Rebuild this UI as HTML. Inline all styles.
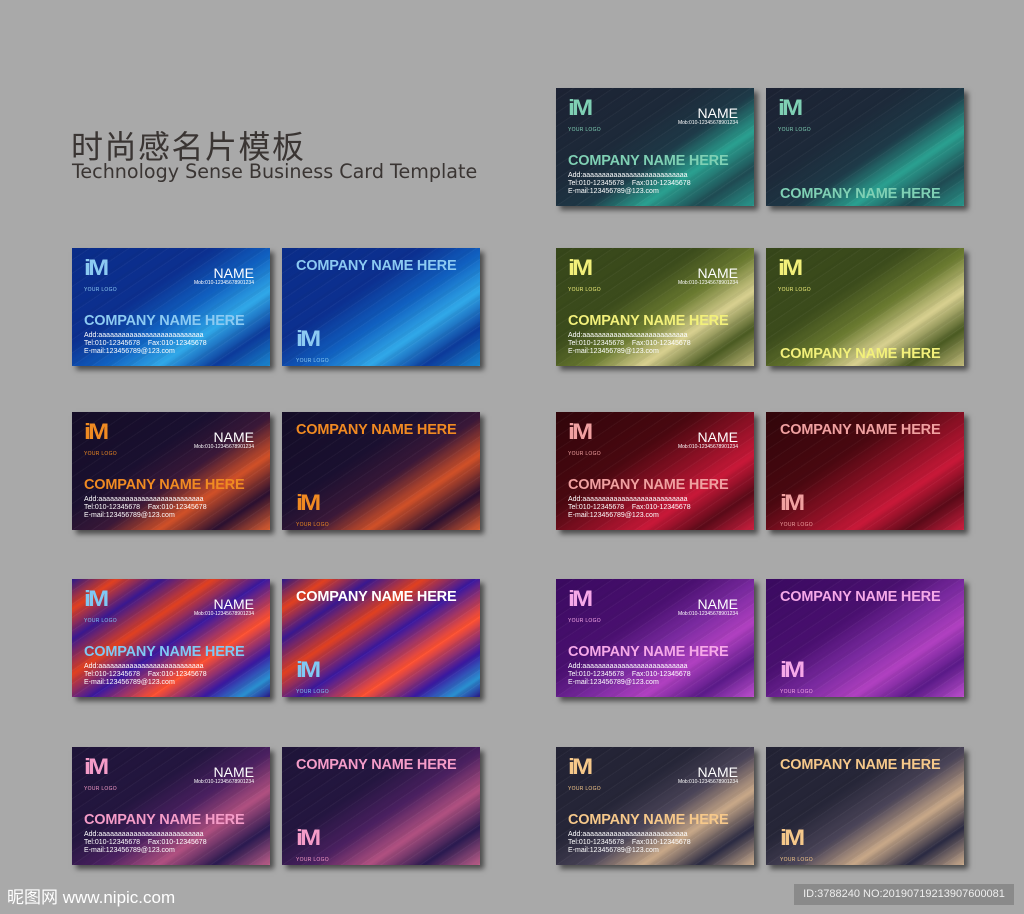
<!DOCTYPE html>
<html><head><meta charset="utf-8"><style>
*{margin:0;padding:0;box-sizing:border-box}
body{width:1024px;height:914px;background:#a9a9a9;position:relative;overflow:hidden;font-family:"Liberation Sans",Arial,sans-serif}
.t1{position:absolute;left:71px;top:122px;font-size:32px;color:#3a3533;font-family:"Liberation Sans","Noto Sans CJK SC",sans-serif;letter-spacing:1.5px;font-weight:normal}
.t2{position:absolute;left:72px;top:160px;font-size:19.5px;color:#3a3533;font-family:"DejaVu Sans","Liberation Sans",sans-serif;white-space:nowrap;transform:scaleX(0.98);transform-origin:left}
.c{position:absolute;width:198px;height:118px;overflow:hidden;box-shadow:4px 4px 5px rgba(0,0,0,.55)}
.c::after{content:"";position:absolute;inset:0;background:repeating-linear-gradient(-34deg,rgba(255,255,255,.035) 0 1px,rgba(0,0,0,.03) 1px 4px,rgba(255,255,255,0) 4px 11px)}
.lg{position:absolute;left:12px;top:10px;z-index:2;font-weight:bold;font-size:22px;letter-spacing:-2.5px;line-height:20px;transform:scaleX(1.15);transform-origin:left}
.lg i{display:block;font-size:5px;letter-spacing:.3px;font-style:normal;margin-top:2px;font-weight:normal;transform:scaleX(.87);transform-origin:left}
.nm{position:absolute;right:16px;top:18px;z-index:2;color:#fff;font-size:14px;text-align:right;line-height:14px}
.nm i{display:block;font-size:5px;font-style:normal;line-height:6px}
.co{position:absolute;left:12px;top:65px;z-index:2;font-weight:bold;font-size:14.5px;white-space:nowrap;letter-spacing:-.2px}
.ad{position:absolute;left:12px;top:84px;z-index:2;color:#fff;font-size:7px;line-height:8px;white-space:nowrap}
.bt .co{top:10px;left:14px}
.bt .lg{top:81px;left:14px}
.bb .co{top:98px;left:14px}
.wm{position:absolute;left:7px;top:883px;color:#fff;font-size:17px;font-family:"Liberation Sans","Noto Sans CJK SC",sans-serif}
.id{position:absolute;left:794px;top:884px;width:220px;height:21px;background:#8a8a8a;color:#eee;font-size:11px;line-height:21px;text-align:center}
.blue{background:linear-gradient(-34deg,#1a88d0 0%,#0c3a9a 15%,#30a8e8 30%,#1060c0 45%,#0c3090 62%,#0a2c88 100%)}
.blue .lg,.blue .co{color:#8ccaf2}
.teal{background:linear-gradient(-34deg,#2a9a8e 0%,#1f4a52 15%,#2aa090 30%,#1e3a48 45%,#1d2a3a 62%,#1c2233 100%)}
.teal .lg,.teal .co{color:#7fd0b4}
.olive{background:linear-gradient(-34deg,#c8c080 0%,#4a5a22 15%,#d8d090 30%,#6a7a30 45%,#3c4c1c 62%,#36461a 100%)}
.olive .lg,.olive .co{color:#f2f07a}
.org{background:linear-gradient(-34deg,#e06030 0%,#2a1030 15%,#d05028 30%,#3a1838 45%,#1a1030 62%,#140c26 100%)}
.org .lg,.org .co{color:#f08a22}
.red{background:linear-gradient(-34deg,#d02040 0%,#5a0a18 15%,#c81838 30%,#8a1024 45%,#4a0810 62%,#30050a 100%)}
.red .lg,.red .co{color:#f0a0a0}
.mix{background:linear-gradient(-34deg,#2a1888 0%,#2a90d0 8%,#3a18a0 18%,#ff5030 32%,#3a18a0 48%,#e04020 62%,#3a1890 76%,#e04020 88%,#2a1888 100%)}
.mix .lg,.mix .co{color:#80c8f4}
.mix.bt .co{color:#fff}
.pur{background:linear-gradient(-34deg,#c050d0 0%,#5a1a88 15%,#b040c0 30%,#7a2aa0 45%,#4a1070 62%,#3a0a60 100%)}
.pur .lg,.pur .co{color:#f6a8e8}
.pink{background:linear-gradient(-34deg,#c0608a 0%,#2a1a50 15%,#b05080 30%,#4a2060 45%,#241640 62%,#1e1438 100%)}
.pink .lg,.pink .co{color:#f59cc8}
.gold{background:linear-gradient(-34deg,#d0b090 0%,#2a2a42 15%,#c8a888 30%,#4a4458 45%,#262638 62%,#222234 100%)}
.gold .lg,.gold .co{color:#f6c88a}
</style></head><body>
<div class="t1">时尚感名片模板</div>
<div class="t2">Technology Sense Business Card Template</div>

<div class="c blue" style="left:72px;top:248px"><div class="lg">iM<i>YOUR LOGO</i></div><div class="nm">NAME<i>Mob:010-12345678901234</i></div><div class="co">COMPANY NAME HERE</div><div class="ad">Add:aaaaaaaaaaaaaaaaaaaaaaaaaaa<br>Tel:010-12345678&nbsp;&nbsp;&nbsp; Fax:010-12345678<br>E-mail:123456789@123.com</div></div>
<div class="c blue bt" style="left:282px;top:248px"><div class="co">COMPANY NAME HERE</div><div class="lg">iM<i>YOUR LOGO</i></div></div>

<div class="c org" style="left:72px;top:412px"><div class="lg">iM<i>YOUR LOGO</i></div><div class="nm">NAME<i>Mob:010-12345678901234</i></div><div class="co">COMPANY NAME HERE</div><div class="ad">Add:aaaaaaaaaaaaaaaaaaaaaaaaaaa<br>Tel:010-12345678&nbsp;&nbsp;&nbsp; Fax:010-12345678<br>E-mail:123456789@123.com</div></div>
<div class="c org bt" style="left:282px;top:412px"><div class="co">COMPANY NAME HERE</div><div class="lg">iM<i>YOUR LOGO</i></div></div>

<div class="c mix" style="left:72px;top:579px"><div class="lg">iM<i>YOUR LOGO</i></div><div class="nm">NAME<i>Mob:010-12345678901234</i></div><div class="co">COMPANY NAME HERE</div><div class="ad">Add:aaaaaaaaaaaaaaaaaaaaaaaaaaa<br>Tel:010-12345678&nbsp;&nbsp;&nbsp; Fax:010-12345678<br>E-mail:123456789@123.com</div></div>
<div class="c mix bt" style="left:282px;top:579px"><div class="co">COMPANY NAME HERE</div><div class="lg">iM<i>YOUR LOGO</i></div></div>

<div class="c pink" style="left:72px;top:747px"><div class="lg">iM<i>YOUR LOGO</i></div><div class="nm">NAME<i>Mob:010-12345678901234</i></div><div class="co">COMPANY NAME HERE</div><div class="ad">Add:aaaaaaaaaaaaaaaaaaaaaaaaaaa<br>Tel:010-12345678&nbsp;&nbsp;&nbsp; Fax:010-12345678<br>E-mail:123456789@123.com</div></div>
<div class="c pink bt" style="left:282px;top:747px"><div class="co">COMPANY NAME HERE</div><div class="lg">iM<i>YOUR LOGO</i></div></div>

<div class="c teal" style="left:556px;top:88px"><div class="lg">iM<i>YOUR LOGO</i></div><div class="nm">NAME<i>Mob:010-12345678901234</i></div><div class="co">COMPANY NAME HERE</div><div class="ad">Add:aaaaaaaaaaaaaaaaaaaaaaaaaaa<br>Tel:010-12345678&nbsp;&nbsp;&nbsp; Fax:010-12345678<br>E-mail:123456789@123.com</div></div>
<div class="c teal bb" style="left:766px;top:88px"><div class="lg">iM<i>YOUR LOGO</i></div><div class="co">COMPANY NAME HERE</div></div>

<div class="c olive" style="left:556px;top:248px"><div class="lg">iM<i>YOUR LOGO</i></div><div class="nm">NAME<i>Mob:010-12345678901234</i></div><div class="co">COMPANY NAME HERE</div><div class="ad">Add:aaaaaaaaaaaaaaaaaaaaaaaaaaa<br>Tel:010-12345678&nbsp;&nbsp;&nbsp; Fax:010-12345678<br>E-mail:123456789@123.com</div></div>
<div class="c olive bb" style="left:766px;top:248px"><div class="lg">iM<i>YOUR LOGO</i></div><div class="co">COMPANY NAME HERE</div></div>

<div class="c red" style="left:556px;top:412px"><div class="lg">iM<i>YOUR LOGO</i></div><div class="nm">NAME<i>Mob:010-12345678901234</i></div><div class="co">COMPANY NAME HERE</div><div class="ad">Add:aaaaaaaaaaaaaaaaaaaaaaaaaaa<br>Tel:010-12345678&nbsp;&nbsp;&nbsp; Fax:010-12345678<br>E-mail:123456789@123.com</div></div>
<div class="c red bt" style="left:766px;top:412px"><div class="co">COMPANY NAME HERE</div><div class="lg">iM<i>YOUR LOGO</i></div></div>

<div class="c pur" style="left:556px;top:579px"><div class="lg">iM<i>YOUR LOGO</i></div><div class="nm">NAME<i>Mob:010-12345678901234</i></div><div class="co">COMPANY NAME HERE</div><div class="ad">Add:aaaaaaaaaaaaaaaaaaaaaaaaaaa<br>Tel:010-12345678&nbsp;&nbsp;&nbsp; Fax:010-12345678<br>E-mail:123456789@123.com</div></div>
<div class="c pur bt" style="left:766px;top:579px"><div class="co">COMPANY NAME HERE</div><div class="lg">iM<i>YOUR LOGO</i></div></div>

<div class="c gold" style="left:556px;top:747px"><div class="lg">iM<i>YOUR LOGO</i></div><div class="nm">NAME<i>Mob:010-12345678901234</i></div><div class="co">COMPANY NAME HERE</div><div class="ad">Add:aaaaaaaaaaaaaaaaaaaaaaaaaaa<br>Tel:010-12345678&nbsp;&nbsp;&nbsp; Fax:010-12345678<br>E-mail:123456789@123.com</div></div>
<div class="c gold bt" style="left:766px;top:747px"><div class="co">COMPANY NAME HERE</div><div class="lg">iM<i>YOUR LOGO</i></div></div>

<div class="wm">昵图网 www.nipic.com</div>
<div class="id">ID:3788240 NO:20190719213907600081</div>
</body></html>
